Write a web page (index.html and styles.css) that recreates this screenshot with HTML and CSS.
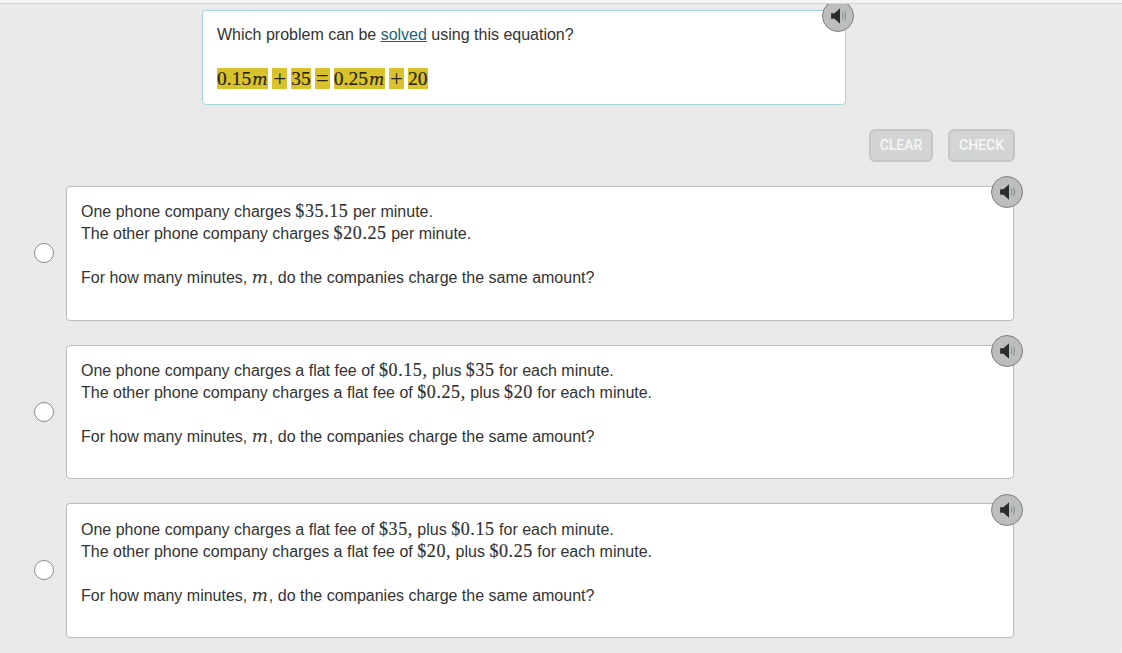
FILE: index.html
```html
<!DOCTYPE html>
<html lang="en">
<head>
    <meta charset="UTF-8">
    <title>Which problem can be solved</title>
    <link rel="stylesheet" href="styles.css">
</head>
<body>
    <div class="stage">
        <div class="prompt">
            <p>Which problem can be <a href="#">solved</a> using this equation?</p>
            <div class="equation">
                <span class="math">0.15<i>m</i></span>
                <span class="math op">+</span>
                <span class="math">35</span>
                <span class="math op">=</span>
                <span class="math">0.25<i>m</i></span>
                <span class="math op">+</span>
                <span class="math">20</span>
            </div>
            <button class="speaker" aria-label="Listen">
                <svg width="20" height="18" viewBox="0 0 18 16"><path d="M1 5.5h3L9 1v14L4 10.5H1z" fill="#2b2b2b"/><path d="M11 5.5q1.5 2.5 0 5M13 4q2.2 4 0 8" fill="none" stroke="#7d8d96" stroke-width="0.9"/></svg>
            </button>
        </div>

        <div class="actions">
            <button class="action clear">CLEAR</button>
            <button class="action check">CHECK</button>
        </div>

        <div class="options">
            <div class="option">
                <span class="radio"></span>
                <div class="card">
                    <div>One phone company charges <span class="num">$35.15</span> per minute.</div>
                    <div>The other phone company charges <span class="num">$20.25</span> per minute.</div>
                    <div class="question">For how many minutes, <i class="var">m</i>, do the companies charge the same amount?</div>
                    <button class="speaker" aria-label="Listen">
                        <svg width="20" height="18" viewBox="0 0 18 16"><path d="M1 5.5h3L9 1v14L4 10.5H1z" fill="#2b2b2b"/><path d="M11 5.5q1.5 2.5 0 5M13 4q2.2 4 0 8" fill="none" stroke="#7d8d96" stroke-width="0.9"/></svg>
                    </button>
                </div>
            </div>
            <div class="option">
                <span class="radio"></span>
                <div class="card">
                    <div>One phone company charges a flat fee of <span class="num">$0.15,</span> plus <span class="num">$35</span> for each minute.</div>
                    <div>The other phone company charges a flat fee of <span class="num">$0.25,</span> plus <span class="num">$20</span> for each minute.</div>
                    <div class="question">For how many minutes, <i class="var">m</i>, do the companies charge the same amount?</div>
                    <button class="speaker" aria-label="Listen">
                        <svg width="20" height="18" viewBox="0 0 18 16"><path d="M1 5.5h3L9 1v14L4 10.5H1z" fill="#2b2b2b"/><path d="M11 5.5q1.5 2.5 0 5M13 4q2.2 4 0 8" fill="none" stroke="#7d8d96" stroke-width="0.9"/></svg>
                    </button>
                </div>
            </div>
            <div class="option">
                <span class="radio"></span>
                <div class="card">
                    <div>One phone company charges a flat fee of <span class="num">$35,</span> plus <span class="num">$0.15</span> for each minute.</div>
                    <div>The other phone company charges a flat fee of <span class="num">$20,</span> plus <span class="num">$0.25</span> for each minute.</div>
                    <div class="question">For how many minutes, <i class="var">m</i>, do the companies charge the same amount?</div>
                    <button class="speaker" aria-label="Listen">
                        <svg width="20" height="18" viewBox="0 0 18 16"><path d="M1 5.5h3L9 1v14L4 10.5H1z" fill="#2b2b2b"/><path d="M11 5.5q1.5 2.5 0 5M13 4q2.2 4 0 8" fill="none" stroke="#7d8d96" stroke-width="0.9"/></svg>
                    </button>
                </div>
            </div>
        </div>
    </div>
</body>
</html>
```

FILE: styles.css
```css
html, body {
    margin: 0;
    height: 653px;
    overflow: hidden;
    background-color: #f4f4f4;
}

body {
    padding-top: 3px;
    box-sizing: border-box;
    font-family: "Liberation Sans", Arial, sans-serif;
    font-size: 16px;
    line-height: 22px;
    color: #333;
}

.stage {
    height: 650px;
    box-sizing: border-box;
    overflow: hidden;
    padding-top: 6px;
    border-top: 1px solid #d4d4d4;
    background-color: #e9e9e9;
    background-image: repeating-conic-gradient(#e5e5e5 0 25%, #eeeeee 0 50%);
    background-size: 2px 2px;
}

.prompt {
    position: relative;
    width: 644px;
    height: 95px;
    box-sizing: border-box;
    margin-left: 202px;
    padding: 13px 14px;
    background: white;
    border: 1px solid #a8d4dd;
    border-radius: 4px;
}

.prompt p {
    margin: 0;
}

.prompt a {
    color: #1d5f7a;
}

.equation {
    display: flex;
    gap: 4px;
    margin-top: 22px;
}

.math {
    height: 21px;
    line-height: 21px;
    font-family: "Liberation Serif", serif;
    font-size: 19.5px;
    color: #2a2410;
    background-color: #d9c22c;
    white-space: nowrap;
    -webkit-text-stroke: 0.2px #2a2410;
}

.math i {
    padding: 0 1px;
    font-family: "DejaVu Serif", serif;
    font-size: 16px;
}

.op {
    width: 15px;
    font-size: 23px;
    text-align: center;
    -webkit-text-stroke: 0;
}

.actions {
    display: flex;
    justify-content: flex-end;
    gap: 15px;
    width: 1015px;
    margin-top: 24px;
}

.action {
    height: 33px;
    padding: 0 0 2px;
    font-family: Roboto, "Liberation Sans", sans-serif;
    font-size: 14px;
    font-weight: 500;
    color: #f6f6f6;
    background-color: #d3d5d5;
    border: 2px solid #c5c7c7;
    border-radius: 6px;
}

.clear {
    width: 64px;
}

.check {
    width: 67px;
}

.options {
    display: flex;
    flex-direction: column;
    gap: 24px;
    margin-top: 24px;
}

.option {
    display: flex;
    align-items: center;
    padding-left: 34px;
}

.radio {
    flex: none;
    width: 20px;
    height: 20px;
    box-sizing: border-box;
    margin-right: 12px;
    background: white;
    border: 1.5px solid #8c8c8c;
    border-radius: 50%;
}

.card {
    position: relative;
    width: 948px;
    height: 134.6px;
    box-sizing: border-box;
    padding: 14.4px 14px;
    background: white;
    border: 1px solid #bcbcbc;
    border-radius: 4px;
}

.question {
    margin-top: 22px;
}

.num {
    font-family: "Liberation Serif", serif;
    font-size: 18px;
    line-height: 1;
    letter-spacing: 0.6px;
    -webkit-text-stroke: 0.2px #333;
}

.var {
    padding-right: 1px;
    font-family: "DejaVu Serif", serif;
    font-size: 17px;
    line-height: 1;
}

.speaker {
    position: absolute;
    display: flex;
    align-items: center;
    justify-content: center;
    width: 32px;
    height: 32px;
    padding: 0;
    background-color: #bcbdbd;
    border: 1px solid #808080;
    border-radius: 50%;
}

.speaker svg {
    margin-left: 4px;
}

.prompt .speaker {
    top: -11px;
    right: -9px;
}

.card .speaker {
    top: -10.6px;
    right: -10px;
}
```
